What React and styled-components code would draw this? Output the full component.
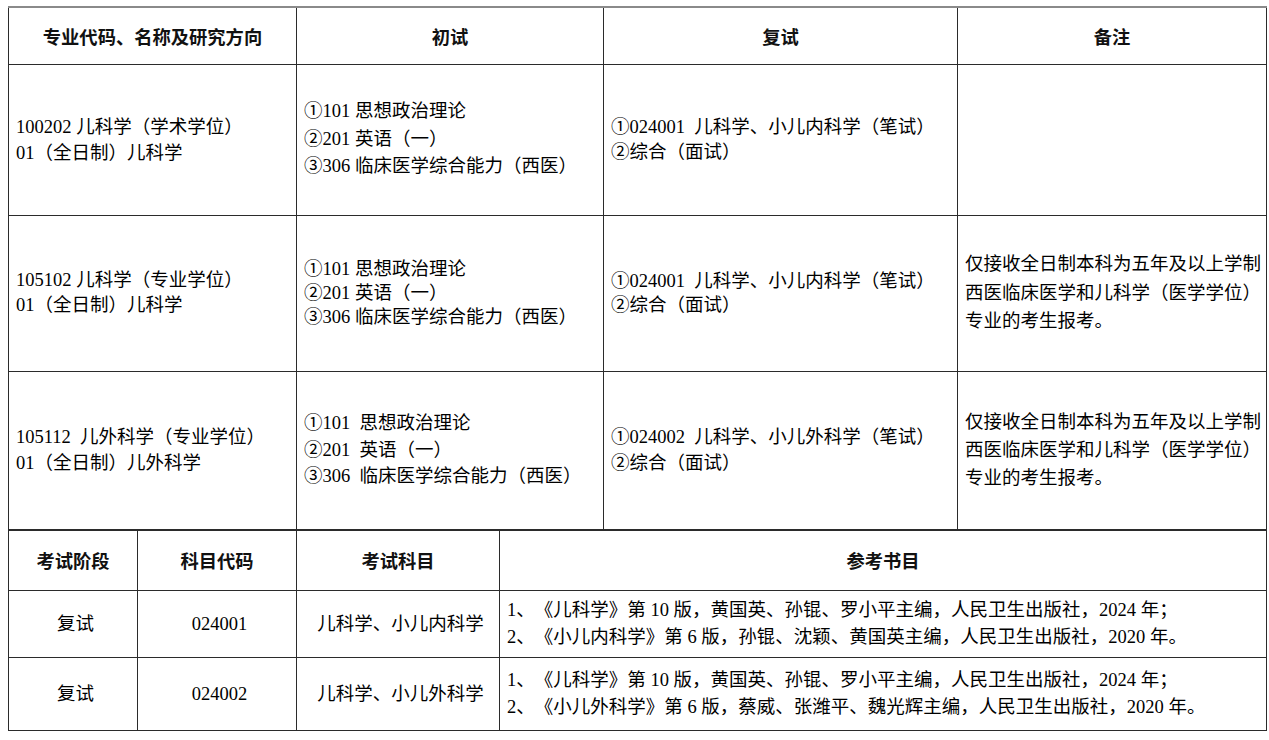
import React from 'react';
import styled, { createGlobalStyle } from 'styled-components';

const Global = createGlobalStyle`
  html, body { margin: 0; padding: 0; background: #ffffff; }
  body {
    font-family: "Liberation Serif", "Noto Sans CJK SC", serif;
    color: #000;
    text-spacing-trim: space-all;
  }
`;

const Page = styled.div`
  padding: 6px 0 8px 8px;
  width: 1258px;
`;

const Table = styled.table`
  width: 1258px;
  border-collapse: collapse;
  table-layout: fixed;
  border-top: ${p => (p.$first ? '2px solid #8a8a8a' : 'none')};
`;

const Row = styled.tr`
  height: ${p => p.$h}px;
`;

const HeadCell = styled.th`
  border: 1px solid #2b2b2b;
  font-family: "Noto Sans CJK SC", sans-serif;
  font-weight: 700;
  font-size: 18.3px;
  line-height: 26px;
  text-align: center;
  vertical-align: middle;
  padding: 0;
  color: #111;
  text-spacing-trim: space-all;
`;

const Cell = styled.td`
  border: 1px solid #2b2b2b;
  font-size: 18.5px;
  line-height: ${p => p.$lh || 26}px;
  padding: 0 2px 0 7px;
  text-align: ${p => (p.$center ? 'center' : 'left')};
  vertical-align: middle;
  white-space: pre;
  overflow: hidden;
  text-spacing-trim: space-all;
`;

const Line = styled.div`
  display: block;
`;

const topRows = [
  {
    h: 151,
    major: ['100202 儿科学（学术学位）', '01（全日制）儿科学'],
    majorLh: 26,
    first: ['①101 思想政治理论', '②201 英语（一）', '③306 临床医学综合能力（西医）'],
    firstLh: 27.5,
    second: ['①024001  儿科学、小儿内科学（笔试）', '②综合（面试）'],
    secondLh: 25,
    note: [],
    noteLh: 28,
  },
  {
    h: 156,
    major: ['105102 儿科学（专业学位）', '01（全日制）儿科学'],
    majorLh: 25,
    first: ['①101 思想政治理论', '②201 英语（一）', '③306 临床医学综合能力（西医）'],
    firstLh: 24,
    second: ['①024001  儿科学、小儿内科学（笔试）', '②综合（面试）'],
    secondLh: 24,
    note: ['仅接收全日制本科为五年及以上学制', '西医临床医学和儿科学（医学学位）', '专业的考生报考。'],
    noteLh: 28.5,
  },
  {
    h: 158,
    major: ['105112  儿外科学（专业学位）', '01（全日制）儿外科学'],
    majorLh: 26,
    first: ['①101  思想政治理论', '②201  英语（一）', '③306  临床医学综合能力（西医）'],
    firstLh: 26.5,
    second: ['①024002  儿科学、小儿外科学（笔试）', '②综合（面试）'],
    secondLh: 26,
    note: ['仅接收全日制本科为五年及以上学制', '西医临床医学和儿科学（医学学位）', '专业的考生报考。'],
    noteLh: 28,
  },
];

const bookRows = [
  {
    h: 67,
    stage: '复试',
    code: '024001',
    subject: '儿科学、小儿内科学',
    books: [
      '1、《儿科学》第 10 版，黄国英、孙锟、罗小平主编，人民卫生出版社，2024 年；',
      '2、《小儿内科学》第 6 版，孙锟、沈颖、黄国英主编，人民卫生出版社，2020 年。',
    ],
  },
  {
    h: 73,
    stage: '复试',
    code: '024002',
    subject: '儿科学、小儿外科学',
    books: [
      '1、《儿科学》第 10 版，黄国英、孙锟、罗小平主编，人民卫生出版社，2024 年；',
      '2、《小儿外科学》第 6 版，蔡威、张潍平、魏光辉主编，人民卫生出版社，2020 年。',
    ],
  },
];

const Lines = ({ items }) => items.map((t, i) => <Line key={i}>{t}</Line>);

export default function App() {
  return (
    <>
      <Global />
      <Page>
        <Table $first>
          <colgroup>
            <col style={{ width: 288 }} />
            <col style={{ width: 307 }} />
            <col style={{ width: 354 }} />
            <col style={{ width: 309 }} />
          </colgroup>
          <thead>
            <Row $h={57}>
              <HeadCell>专业代码、名称及研究方向</HeadCell>
              <HeadCell>初试</HeadCell>
              <HeadCell>复试</HeadCell>
              <HeadCell>备注</HeadCell>
            </Row>
          </thead>
          <tbody>
            {topRows.map((r, i) => (
              <Row key={i} $h={r.h}>
                <Cell $lh={r.majorLh}><Lines items={r.major} /></Cell>
                <Cell $lh={r.firstLh}><Lines items={r.first} /></Cell>
                <Cell $lh={r.secondLh}><Lines items={r.second} /></Cell>
                <Cell $lh={r.noteLh}><Lines items={r.note} /></Cell>
              </Row>
            ))}
          </tbody>
        </Table>
        <Table>
          <colgroup>
            <col style={{ width: 129 }} />
            <col style={{ width: 159 }} />
            <col style={{ width: 203 }} />
            <col style={{ width: 767 }} />
          </colgroup>
          <thead>
            <Row $h={60}>
              <HeadCell>考试阶段</HeadCell>
              <HeadCell>科目代码</HeadCell>
              <HeadCell>考试科目</HeadCell>
              <HeadCell>参考书目</HeadCell>
            </Row>
          </thead>
          <tbody>
            {bookRows.map((r, i) => (
              <Row key={i} $h={r.h}>
                <Cell $center>{r.stage}</Cell>
                <Cell $center>{r.code}</Cell>
                <Cell $center>{r.subject}</Cell>
                <Cell $lh={27}><Lines items={r.books} /></Cell>
              </Row>
            ))}
          </tbody>
        </Table>
      </Page>
    </>
  );
}
